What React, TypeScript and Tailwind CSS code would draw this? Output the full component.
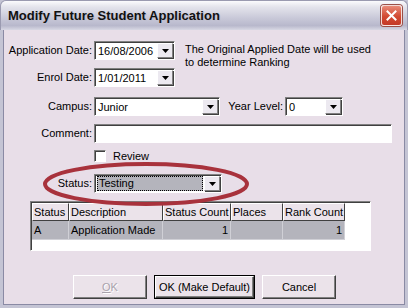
import React from 'react';

const font = { fontFamily: '"Liberation Sans", Arial, sans-serif' };

function DropButton() {
  return (
    <div className="w-[16px] h-[15px] shrink-0 mt-[1px] mr-[1px] bg-[#ece9f0] border border-t-white border-l-white border-r-[#808080] border-b-[#808080] shadow-[1px_1px_0_#404040] flex items-center justify-center">
      <svg width="7" height="4" viewBox="0 0 7 4">
        <polygon points="0,0 7,0 3.5,4" fill="#000" />
      </svg>
    </div>
  );
}

function Combo({ value, width, selected }: { value: string; width: string; selected?: boolean }) {
  return (
    <div
      className={`${width} h-[19px] shrink-0 bg-white border border-t-[#808080] border-l-[#808080] border-r-white border-b-white shadow-[inset_1px_1px_0_#404040] flex items-start`}
    >
      <div className="flex-1 h-full pl-[2px] pt-[1px] pr-[1px]">
        {selected ? (
          <div className="h-[15px] bg-[#b4b4bc] border border-dotted border-black pl-[1px] leading-[13px] text-black">
            {value}
          </div>
        ) : (
          <span className="leading-[16px] pl-[1px]">{value}</span>
        )}
      </div>
      <DropButton />
    </div>
  );
}

function Label({ children }: { children: React.ReactNode }) {
  return <div className="w-[90px] shrink-0 text-right pr-[2px] leading-[19px] whitespace-nowrap">{children}</div>;
}

function Button({ children, disabled, isDefault, width }: { children: React.ReactNode; disabled?: boolean; isDefault?: boolean; width: string }) {
  return (
    <div className={`${width} h-[24px] shrink-0 flex ${isDefault ? 'border border-black' : ''}`}>
      <div className="w-full h-full bg-[#ebe3ea] border border-t-white border-l-white border-r-[#404040] border-b-[#404040] shadow-[inset_-1px_-1px_0_#808080] flex items-center justify-center whitespace-nowrap">
        <span className={disabled ? 'text-[#a9a2ac] [text-shadow:1px_1px_0_#fff]' : 'text-black'}>{children}</span>
      </div>
    </div>
  );
}

const cols = [
  { name: 'Status', w: 'w-[37px]', align: 'text-left' },
  { name: 'Description', w: 'w-[94px]', align: 'text-left' },
  { name: 'Status Count', w: 'w-[68px]', align: 'text-right' },
  { name: 'Places', w: 'w-[52px]', align: 'text-right' },
  { name: 'Rank Count', w: 'w-[62px]', align: 'text-right' },
];

const row = ['A', 'Application Made', '1', '', '1'];

export default function App() {
  return (
    <div style={font} className="w-[408px] h-[308px] text-[11px] text-black flex flex-col bg-[#c4c4d4] relative overflow-hidden">
      {/* title bar */}
      <div className="h-[30px] shrink-0 flex items-center justify-between pl-[7px] pr-[5px] bg-[linear-gradient(#fbfbfd_0%,#e4e4ec_20%,#c8c8d8_60%,#b8b8cc_85%,#d8d8e4_100%)] rounded-t-[6px] border-t border-x border-[#9a9ab0]">
        <span className="font-bold text-[13px] text-[#111] [text-shadow:1px_1px_0_#c0c0d0]">Modify Future Student Application</span>
        <div className="w-[21px] h-[21px] rounded-[3px] bg-[linear-gradient(#e88a78,#d24a32_55%,#c43a28)] border border-white/80 flex items-center justify-center shadow-[0_0_0_1px_#9a5048]">
          <svg width="11" height="11" viewBox="0 0 11 11">
            <path d="M1.5 1.5 L9.5 9.5 M9.5 1.5 L1.5 9.5" stroke="#fff" strokeWidth="2" strokeLinecap="square" />
          </svg>
        </div>
      </div>

      {/* body */}
      <div className="flex-1 mx-[3px] mb-[3px] bg-[#e8dee8] border-l border-r border-b border-[#8a8aa4] flex flex-col pt-[11px]">
        <div className="flex items-start h-[19px]">
          <Label>Application Date:</Label>
          <Combo value="16/08/2006" width="w-[81px]" />
          <div className="ml-[10px] leading-[13px] pt-[2px] whitespace-nowrap">
            The Original Applied Date will be used
            <br />
            to determine Ranking
          </div>
        </div>

        <div className="flex items-start h-[19px] mt-[8px]">
          <Label>Enrol Date:</Label>
          <Combo value="1/01/2011" width="w-[81px]" />
        </div>

        <div className="flex items-start h-[19px] mt-[10px]">
          <Label>Campus:</Label>
          <Combo value="Junior" width="w-[126px]" />
          <div className="w-[65px] shrink-0 text-right pr-[2px] leading-[19px] whitespace-nowrap">Year Level:</div>
          <Combo value="0" width="w-[58px]" />
        </div>

        <div className="flex items-start h-[19px] mt-[8px]">
          <Label>Comment:</Label>
          <div className="w-[298px] h-[19px] shrink-0 bg-white border border-t-[#808080] border-l-[#808080] border-r-white border-b-white shadow-[inset_1px_1px_0_#404040]" />
        </div>

        <div className="flex items-center h-[12px] mt-[7px] ml-[90px]">
          <div className="w-[12px] h-[12px] bg-white border border-t-[#808080] border-l-[#808080] border-r-white border-b-white shadow-[inset_1px_1px_0_#404040]" />
          <span className="ml-[7px]">Review</span>
        </div>

        <div className="flex items-start h-[19px] mt-[12px]">
          <Label>Status:</Label>
          <Combo value="Testing" width="w-[128px]" selected />
        </div>

        {/* grid */}
        <div className="ml-[26px] mt-[8px] w-[341px] h-[50px] shrink-0 bg-white border border-t-[#808080] border-l-[#808080] border-r-white border-b-white shadow-[inset_1px_1px_0_#404040] pt-[1px] pl-[1px]">
          <div className="flex">
            {cols.map((c) => (
              <div
                key={c.name}
                className={`${c.w} h-[18px] shrink-0 bg-[#ebe3ea] border border-t-white border-l-white border-r-[#404040] border-b-[#404040] pl-[1px] leading-[16px] whitespace-nowrap overflow-hidden`}
              >
                {c.name}
              </div>
            ))}
          </div>
          <div className="flex">
            {cols.map((c, i) => (
              <div
                key={c.name}
                className={`${c.w} h-[19px] shrink-0 bg-[#b4b4bc] border-r border-b border-[#d0d0d6] px-[2px] leading-[18px] ${c.align} whitespace-nowrap`}
              >
                {row[i]}
              </div>
            ))}
          </div>
        </div>

        {/* buttons */}
        <div className="flex mt-[24px] ml-[69px] gap-[7px]">
          <Button width="w-[74px]" disabled>
            <span className="underline">O</span>K
          </Button>
          <Button width="w-[101px]" isDefault>
            OK (Make Default)
          </Button>
          <Button width="w-[74px]">Cancel</Button>
        </div>
      </div>

      {/* highlight ellipse */}
      <svg className="absolute left-[41px] top-[161px] pointer-events-none" width="210" height="46" viewBox="0 0 210 46">
        <ellipse cx="105" cy="23" rx="101" ry="20" fill="none" stroke="#a8323c" strokeWidth="4" />
      </svg>
    </div>
  );
}
